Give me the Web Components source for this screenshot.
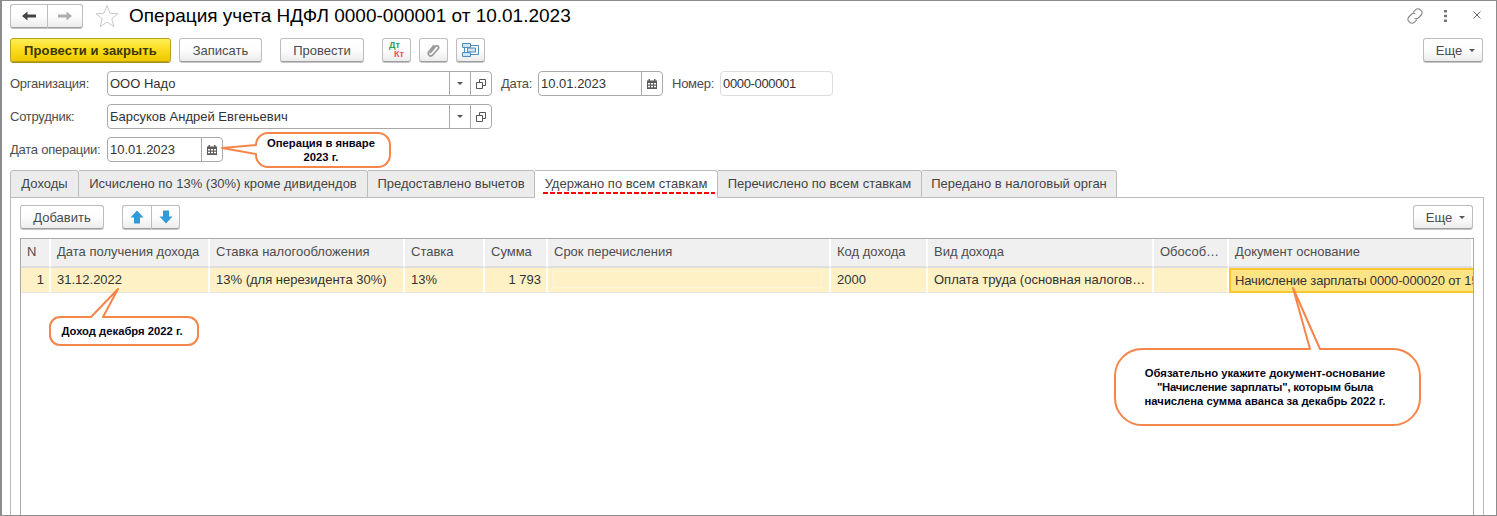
<!DOCTYPE html>
<html lang="ru">
<head>
<meta charset="utf-8">
<title>Операция учета НДФЛ</title>
<style>
    html, body { margin: 0; padding: 0; background: #fff; }
    body { font: 13px "Liberation Sans", Arial, sans-serif; color: #4a4a4a; }
</style>
</head>
<body>
<onec-window>
    <onec-row style="height:24px;margin-bottom:10px">
        <onec-button-group>
            <onec-button style="width:37px"><onec-icon name="back"></onec-icon></onec-button>
            <onec-button style="width:36px"><onec-icon name="forward"></onec-icon></onec-button>
        </onec-button-group>
        <onec-icon name="star" style="margin-left:12px"></onec-icon>
        <span style="margin-left:10px;font-size:19px;color:#000">Операция учета НДФЛ 0000-000001 от 10.01.2023</span>
        <onec-icon name="link" style="margin-left:auto"></onec-icon>
        <onec-icon name="dots" style="margin-left:20px"></onec-icon>
        <onec-icon name="close" style="margin-left:26px;margin-right:3px;margin-bottom:2px"></onec-icon>
    </onec-row>
    <onec-row style="height:24px;margin-bottom:9px">
        <onec-button primary style="width:161px">Провести и закрыть</onec-button>
        <onec-button style="width:83px;margin-left:8px">Записать</onec-button>
        <onec-button style="width:84px;margin-left:18px">Провести</onec-button>
        <onec-button style="width:29px;margin-left:18px"><onec-icon name="dtkt"></onec-icon></onec-button>
        <onec-button style="width:29px;margin-left:8px"><onec-icon name="clip"></onec-icon></onec-button>
        <onec-button style="width:29px;margin-left:8px"><onec-icon name="struct"></onec-icon></onec-button>
        <onec-button menu style="width:60px;margin-left:auto;margin-right:1px">Еще</onec-button>
    </onec-row>
    <onec-row style="height:25px;margin-bottom:8px">
        <onec-label style="width:97px">Организация:</onec-label>
        <onec-field value="ООО Надо" actions="choose open" style="width:385px"></onec-field>
        <onec-label style="width:37px;margin-left:9px">Дата:</onec-label>
        <onec-field value="10.01.2023" actions="calendar" style="width:125px"></onec-field>
        <onec-label style="width:48px;margin-left:9px">Номер:</onec-label>
        <onec-field value="0000-000001" light style="width:113px"></onec-field>
    </onec-row>
    <onec-row style="height:25px;margin-bottom:8px">
        <onec-label style="width:97px">Сотрудник:</onec-label>
        <onec-field value="Барсуков Андрей Евгеньевич" actions="choose open" style="width:385px"></onec-field>
    </onec-row>
    <onec-row style="height:25px;margin-bottom:8px">
        <onec-label style="width:97px">Дата операции:</onec-label>
        <onec-field value="10.01.2023" actions="calendar" style="width:116px"></onec-field>
    </onec-row>
    <onec-tabs>
        <onec-tab style="width:69px">Доходы</onec-tab>
        <onec-tab style="width:289px">Исчислено по 13% (30%) кроме дивидендов</onec-tab>
        <onec-tab style="width:167px">Предоставлено вычетов</onec-tab>
        <onec-tab active style="width:183px">Удержано по всем ставкам</onec-tab>
        <onec-tab style="width:204px">Перечислено по всем ставкам</onec-tab>
        <onec-tab style="width:195px">Передано в налоговый орган</onec-tab>
    </onec-tabs>
    <onec-panel>
        <onec-row style="height:24px;margin-bottom:9px">
            <onec-button style="width:84px">Добавить</onec-button>
            <onec-button-group style="margin-left:18px">
                <onec-button style="width:29px"><onec-icon name="up"></onec-icon></onec-button>
                <onec-button style="width:29px"><onec-icon name="down"></onec-icon></onec-button>
            </onec-button-group>
            <onec-button menu style="width:60px;margin-left:auto;margin-right:1px">Еще</onec-button>
        </onec-row>
        <onec-grid></onec-grid>
    </onec-panel>

    <onec-callout style="left:254px;top:132px;width:134px;height:34px" side="left" a="12" b="21" tx="-34" ty="15" r="12" pad="4">Операция в январе<br>2023 г.</onec-callout>
    <onec-callout style="left:48px;top:316px;width:148px;height:28px" side="top" a="41" b="53" tx="68" ty="-28" r="10" pad="4">Доход декабря 2022 г.</onec-callout>
    <onec-callout style="left:1113px;top:348px;width:305px;height:76px" side="top" a="195" b="205" tx="178" ty="-61" r="27" pad="5">Обязательно укажите документ-основание<br><span style="letter-spacing:-.2px">"Начисление зарплаты", которым была</span><br>начислена сумма аванса за декабрь 2022 г.</onec-callout>
</onec-window>

<script>
const icons = {
    back: [14, 10, '<path d="M0 5 5.5.5V3.5H14V6.5H5.5V9.5Z" fill="#444"/>'],
    forward: [14, 10, '<path d="M14 5 8.5.5V3.5H0V6.5H8.5V9.5Z" fill="#adadad"/>'],
    star: [24, 24, '<path d="M12 1.5 15 9.2 23 9.7 16.8 14.8 18.9 22.6 12 18.2 5.1 22.6 7.2 14.8 1 9.7 9 9.2Z" fill="#fff" stroke="#c9c9c9"/>'],
    link: [18, 18, '<g fill="none" stroke="#858585" stroke-width="1.1"><path d="M7.2 5.2 9.8 2.6a3 3 0 0 1 4.3 0l1.1 1.1a3 3 0 0 1 0 4.3l-3 3a3 3 0 0 1-3.6.4"/><path d="M10.8 12.8 8.2 15.4a3 3 0 0 1-4.3 0L2.8 14.3a3 3 0 0 1 0-4.3l3-3a3 3 0 0 1 3.6-.4"/></g>'],
    dots: [3, 12, '<path d="M0 0h3v2.4H0zM0 4.8h3v2.4H0zM0 9.6h3v2.4H0z" fill="#777"/>'],
    close: [8, 8, '<path d="M.5.5 7.5 7.5M7.5.5.5 7.5" stroke="#666" fill="none"/>'],
    clip: [13, 14, '<path d="M3.5 9.5 8.5 3.4a1.8 1.8 0 0 1 2.7 2.4L5.5 12.2a2.5 2.5 0 0 1-3.8-3.2L6.8 2.6" fill="none" stroke="#9a9a9a" stroke-width="1.7" stroke-linecap="round"/>'],
    struct: [17, 14, '<g stroke="#4b8fc0"><path d="M2.5 4v6M9 2.5h7.5v9H9" fill="none"/><path d="M.5.5h8v4h-8zM5.5 5h8v4h-8zM.5 9.5h8v4h-8z" fill="#cfe3f3"/></g>'],
    up: [14, 14, '<path d="M7 .5 13.5 7.5H10V13.5H4V7.5H.5Z" fill="#2f9bd8"/>'],
    down: [14, 14, '<path d="M7 13.5 13.5 6.5H10V.5H4V6.5H.5Z" fill="#2f9bd8"/>'],
    drop: [6, 3, '<path d="M0 0H6L3 3Z" fill="#555"/>'],
    open: [10, 10, '<path d="M3.5 3.5V.5H9.5V6.5H6.5M.5 3.5H6.5V9.5H.5Z" fill="none" stroke="#555"/>'],
    calendar: [10, 10, '<path d="M0 1.5H1.5V0H3V1.5H7V0H8.5V1.5H10V10H0Z" fill="#5c5c5c"/><path d="M1 4h2v1.5H1zM4 4h2v1.5H4zM7 4h2v1.5H7zM1 6.8h2v1.5H1zM4 6.8h2v1.5H4zM7 6.8h2v1.5H7z" fill="#fff"/>']
};

class OnecIcon extends HTMLElement {
    connectedCallback() {
        if (this.shadowRoot) return;
        const name = this.getAttribute('name');
        const root = this.attachShadow({ mode: 'open' });
        if (name === 'dtkt') {
            root.innerHTML = `<style>
                :host { display: block; width: 15px; height: 18px; font: bold 9px/9px "Liberation Sans", Arial, sans-serif; }
                .dt { color: #25a055; display: block; }
                .kt { color: #e8505a; display: block; text-align: right; }
            </style><span class="dt">Дт</span><span class="kt">Кт</span>`;
            return;
        }
        const [w, h, body] = icons[name];
        root.innerHTML = `<style>:host { display: inline-flex; flex: none; } svg { display: block; }</style>
            <svg width="${w}" height="${h}" viewBox="0 0 ${w} ${h}">${body}</svg>`;
    }
}
customElements.define('onec-icon', OnecIcon);

class OnecWindow extends HTMLElement {
    constructor() {
        super();
        this.attachShadow({ mode: 'open' }).innerHTML = `<style>
            :host {
                display: flex; flex-direction: column; position: relative; box-sizing: border-box;
                width: 1497px; height: 516px; overflow: hidden; background: #fff;
                border: 1px solid #8c8c8c; border-left-width: 2px;
                padding: 3px 12px 0 8px;
            }
        </style><slot></slot>`;
    }
}
customElements.define('onec-window', OnecWindow);

class OnecRow extends HTMLElement {
    constructor() {
        super();
        this.attachShadow({ mode: 'open' }).innerHTML = `<style>
            :host { display: flex; align-items: center; flex: none; }
        </style><slot></slot>`;
    }
}
customElements.define('onec-row', OnecRow);

class OnecButton extends HTMLElement {
    constructor() {
        super();
        this.attachShadow({ mode: 'open' }).innerHTML = `<style>
            :host {
                display: flex; align-items: center; justify-content: center; flex: none; box-sizing: border-box;
                height: 24px; border: 1px solid #bdbdbd; border-bottom-color: #9f9f9f; border-radius: 3px;
                background: linear-gradient(#fff 0%, #fdfdfd 50%, #ececec 100%);
                box-shadow: 0 1px 0 #c4c4c4; color: #4a4a4a; font-size: 13px; white-space: nowrap;
            }
            :host([primary]) {
                background: linear-gradient(#ffee58 0%, #fbdc1c 50%, #efc800 100%);
                border-color: #b9a21a; box-shadow: 0 1px 0 #a89312;
                color: #3c3600; font-weight: bold; letter-spacing: .15px;
            }
            :host([menu]) { padding-left: 5px; gap: 7px; }
            .drop { display: none; width: 0; height: 0; border: 3px solid transparent; border-top: 3px solid #555; border-bottom: 0; }
            :host([menu]) .drop { display: block; }
        </style><slot></slot><span class="drop"></span>`;
    }
}
customElements.define('onec-button', OnecButton);

class OnecButtonGroup extends HTMLElement {
    constructor() {
        super();
        this.attachShadow({ mode: 'open' }).innerHTML = `<style>
            :host { display: flex; flex: none; }
            ::slotted(onec-button:first-child) { border-radius: 3px 0 0 3px; border-right: 0; }
            ::slotted(onec-button:last-child) { border-radius: 0 3px 3px 0; }
        </style><slot></slot>`;
    }
}
customElements.define('onec-button-group', OnecButtonGroup);

class OnecLabel extends HTMLElement {
    constructor() {
        super();
        this.attachShadow({ mode: 'open' }).innerHTML = `<style>
            :host { display: block; flex: none; color: #4d4d4d; font-size: 13px; letter-spacing: -.25px; white-space: nowrap; }
        </style><slot></slot>`;
    }
}
customElements.define('onec-label', OnecLabel);

class OnecField extends HTMLElement {
    connectedCallback() {
        if (this.shadowRoot) return;
        const actions = (this.getAttribute('actions') || '').split(' ').filter(Boolean);
        const buttons = actions.map(a => {
            const icon = a === 'choose' ? 'drop' : a;
            return `<span class="action ${a}"><onec-icon name="${icon}"></onec-icon></span>`;
        }).join('');
        this.attachShadow({ mode: 'open' }).innerHTML = `<style>
            :host {
                display: flex; flex: none; box-sizing: border-box; height: 25px;
                border: 1px solid #a9a9a9; border-radius: 4px; background: #fff;
            }
            :host([light]) { border-color: #dcdcdc; }
            :host([light]) .value { letter-spacing: -.35px; }
            .value { flex: 1; padding-left: 2px; line-height: 23px; color: #333; font-size: 13px; white-space: nowrap; overflow: hidden; }
            .action { flex: none; box-sizing: border-box; width: 21px; display: flex; align-items: center; justify-content: center; border-left: 1px solid #a9a9a9; }
        </style><span class="value">${this.getAttribute('value')}</span>${buttons}`;
    }
}
customElements.define('onec-field', OnecField);

class OnecTabs extends HTMLElement {
    constructor() {
        super();
        this.attachShadow({ mode: 'open' }).innerHTML = `<style>
            :host { display: flex; flex: none; height: 27px; position: relative; z-index: 1; }
        </style><slot></slot>`;
    }
}
customElements.define('onec-tabs', OnecTabs);

class OnecTab extends HTMLElement {
    constructor() {
        super();
        this.attachShadow({ mode: 'open' }).innerHTML = `<style>
            :host {
                display: flex; align-items: center; justify-content: center; position: relative; flex: none;
                box-sizing: border-box; height: 28px; padding-bottom: 1px; margin-right: 0;
                background: #ececec; color: #444; font-size: 13px; white-space: nowrap;
                border: 1px solid #bcbcbc; border-left-width: 0; border-radius: 0 3px 0 0;
            }
            :host(:first-child) { border-left-width: 1px; border-radius: 3px 3px 0 0; }
            :host([active]) { background: #fff; border-bottom-color: #fff; }
            .mark { display: none; position: absolute; left: 8px; right: 2px; top: 21px; height: 2px;
                background: repeating-linear-gradient(90deg, #f00 0 5px, transparent 5px 7px); }
            :host([active]) .mark { display: block; }
        </style><slot></slot><span class="mark"></span>`;
    }
}
customElements.define('onec-tab', OnecTab);

class OnecPanel extends HTMLElement {
    constructor() {
        super();
        this.attachShadow({ mode: 'open' }).innerHTML = `<style>
            :host {
                display: flex; flex-direction: column; flex: 1; min-height: 0; box-sizing: border-box;
                border: 1px solid #bcbcbc; border-bottom: 0; padding: 7px 9px 0 9px;
            }
        </style><slot></slot>`;
    }
}
customElements.define('onec-panel', OnecPanel);

const gridColumns = [
    { title: 'N', width: 30 },
    { title: 'Дата получения дохода', width: 159 },
    { title: 'Ставка налогообложения', width: 195 },
    { title: 'Ставка', width: 80 },
    { title: 'Сумма', width: 63 },
    { title: 'Срок перечисления', width: 283 },
    { title: 'Код дохода', width: 97 },
    { title: 'Вид дохода', width: 226 },
    { title: 'Обособ…', width: 75 },
    { title: 'Документ основание', width: 244 }
];
const gridRow = ['1', '31.12.2022', '13% (для нерезидента 30%)', '13%', '1 793', '', '2000',
    'Оплата труда (основная налогов…', '', 'Начисление зарплаты 0000-000020 от 15.12.2022'];

class OnecGrid extends HTMLElement {
    constructor() {
        super();
        const template = gridColumns.map(c => c.width + 'px').join(' ');
        const head = gridColumns.map(c => `<div class="head">${c.title}</div>`).join('');
        const cells = gridRow.map((text, i) => {
            let cls = 'cell';
            if (i === 0 || i === 4) cls += ' num';
            if (i === 5) cls += ' edit';
            if (i === 9) cls += ' current';
            return `<div class="${cls}">${i === 5 ? '<span></span>' : text}</div>`;
        }).join('');
        this.attachShadow({ mode: 'open' }).innerHTML = `<style>
            :host {
                display: block; flex: 1; box-sizing: border-box; width: 1454px;
                border: 1px solid #a9a9a9; border-bottom: 0; font-size: 13px;
            }
            .table { display: grid; grid-template-columns: ${template}; grid-template-rows: 29px 25px; }
            .head, .cell { box-sizing: border-box; white-space: nowrap; overflow: hidden; }
            .head {
                background: #f0f0f0; color: #4d4d4d; padding-left: 6px; line-height: 26px;
                border-right: 2px solid #fff; border-bottom: 2px solid #dedede;
            }
            .head:last-of-type { border-right: 0; }
            .cell {
                background: #fef1c6; color: #333; padding-left: 6px; line-height: 24px;
                border-right: 2px solid #fff; border-bottom: 1px solid #e4e4e4;
            }
            .num { text-align: right; padding: 0 5px 0 0; }
            .edit { padding: 3px 7px 4px 5px; }
            .edit span { display: block; height: 100%; box-sizing: border-box; border: 1px solid #fdf5d8; }
            .current {
                background: #ffe486; border: 2px solid #fcc72c; border-right: 0; padding-left: 4px;
                line-height: 21px; letter-spacing: -.15px;
            }
        </style><div class="table">${head}${cells}</div>`;
    }
}
customElements.define('onec-grid', OnecGrid);

class OnecCallout extends HTMLElement {
    constructor() {
        super();
        this.attachShadow({ mode: 'open' });
    }

    connectedCallback() {
        const w = parseFloat(this.style.width);
        const h = parseFloat(this.style.height);
        const r = +this.getAttribute('r');
        const a = +this.getAttribute('a');
        const b = +this.getAttribute('b');
        const tx = +this.getAttribute('tx');
        const ty = +this.getAttribute('ty');
        const side = this.getAttribute('side');
        const pad = this.getAttribute('pad') || 0;
        const arc = `A${r} ${r} 0 0 1`;
        // rounded box going clockwise from the top left, tip goes in on its own side
        const top = side === 'top' ? `L${a} 0L${tx} ${ty}L${b} 0` : '';
        const left = side === 'left' ? `L0 ${b}L${tx} ${ty}L0 ${a}` : '';
        const d = `M${r} 0${top}L${w - r} 0${arc} ${w} ${r}L${w} ${h - r}${arc} ${w - r} ${h}L${r} ${h}${arc} 0 ${h - r}${left}L0 ${r}${arc} ${r} 0Z`;
        this.shadowRoot.innerHTML = `<style>
            :host {
                position: absolute; display: flex; align-items: center; justify-content: center;
                box-sizing: border-box; padding-right: ${pad}px; z-index: 2;
                font: bold 11.25px/14px "Liberation Sans", Arial, sans-serif; color: #05051a; text-align: center;
            }
            svg { position: absolute; left: 0; top: 0; overflow: visible; z-index: -1; }
            div { position: relative; white-space: nowrap; }
        </style>
        <svg width="${w}" height="${h}"><path d="${d}" fill="#fff" stroke="#f6854a" stroke-width="2" stroke-linejoin="round"/></svg>
        <div><slot></slot></div>`;
    }
}
customElements.define('onec-callout', OnecCallout);
</script>
</body>
</html>
